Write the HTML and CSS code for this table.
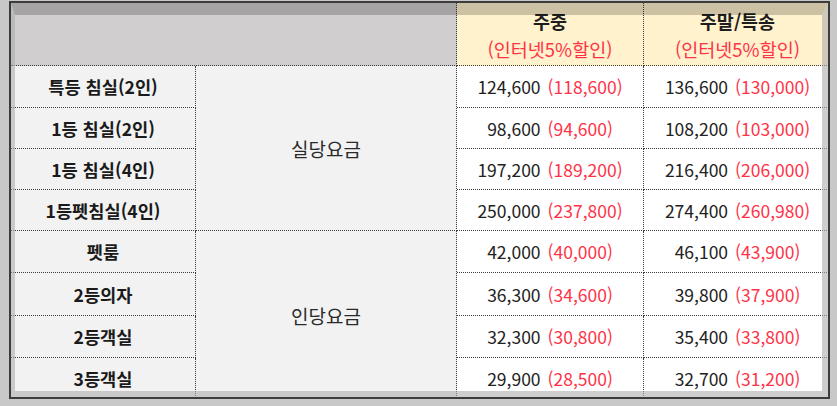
FILE: index.html
```html
<!DOCTYPE html>
<html lang="ko">
<head>
<meta charset="utf-8">
<title>요금표</title>
<link rel="stylesheet" href="styles.css">
</head>
<body>
<div class="window">
  <div class="grid">
    <div class="cell head-gray"></div>
    <div class="cell head-yellow"><span class="h-title">주중</span><span class="h-sub">(인터넷5%할인)</span></div>
    <div class="cell head-yellow last"><span class="h-title">주말/특송</span><span class="h-sub">(인터넷5%할인)</span></div>

    <div class="cell room">특등 침실(2인)</div>
    <div class="cell kind kind-a">실당요금</div>
    <div class="cell price"><span>124,600</span><span class="dc">(118,600)</span></div>
    <div class="cell price last"><span>136,600</span><span class="dc">(130,000)</span></div>

    <div class="cell room">1등 침실(2인)</div>
    <div class="cell price"><span>98,600</span><span class="dc">(94,600)</span></div>
    <div class="cell price last"><span>108,200</span><span class="dc">(103,000)</span></div>

    <div class="cell room">1등 침실(4인)</div>
    <div class="cell price"><span>197,200</span><span class="dc">(189,200)</span></div>
    <div class="cell price last"><span>216,400</span><span class="dc">(206,000)</span></div>

    <div class="cell room">1등펫침실(4인)</div>
    <div class="cell price"><span>250,000</span><span class="dc">(237,800)</span></div>
    <div class="cell price last"><span>274,400</span><span class="dc">(260,980)</span></div>

    <div class="cell room">펫룸</div>
    <div class="cell kind kind-b">인당요금</div>
    <div class="cell price"><span>42,000</span><span class="dc">(40,000)</span></div>
    <div class="cell price last"><span>46,100</span><span class="dc">(43,900)</span></div>

    <div class="cell room">2등의자</div>
    <div class="cell price"><span>36,300</span><span class="dc">(34,600)</span></div>
    <div class="cell price last"><span>39,800</span><span class="dc">(37,900)</span></div>

    <div class="cell room">2등객실</div>
    <div class="cell price"><span>32,300</span><span class="dc">(30,800)</span></div>
    <div class="cell price last"><span>35,400</span><span class="dc">(33,800)</span></div>

    <div class="cell room">3등객실</div>
    <div class="cell price"><span>29,900</span><span class="dc">(28,500)</span></div>
    <div class="cell price last"><span>32,700</span><span class="dc">(31,200)</span></div>
  </div>
  <div class="frame"></div>
</div>
</body>
</html>
```
FILE: styles.css
```css
* { box-sizing: border-box; }
html, body {
  margin: 0;
  padding: 0;
  background: #c8c8c8;
  width: 837px;
  height: 406px;
  overflow: hidden;
}
body {
  padding: 1px 0 0 9px;
  font-family: "Noto Sans CJK KR", "Noto Sans", sans-serif;
  color: #1e1e1e;
}
.window {
  position: relative;
  width: 821px;
  height: 398px;
  border: 2px solid #3c3c3c;
  overflow: hidden;
  background: #c8c8c8;
}
.grid {
  display: grid;
  width: 820px;
  grid-template-columns: 185px 261px 187px 187px;
  grid-template-rows: 63px 42px 41px 41px 41px 42px 43px 42px 42px;
}
.cell {
  border-right: 1px dotted #3a3a3a;
  border-bottom: 1px dotted #3a3a3a;
  display: flex;
  align-items: center;
  justify-content: center;
  white-space: nowrap;
}
.head-gray {
  grid-column: 1 / 3;
  background: #d0cece;
}
.head-yellow {
  background: #fff2cc;
  flex-direction: column;
  padding-top: 2px;
}
.h-title {
  font-weight: 700;
  font-size: 18.5px;
  line-height: 28px;
  color: #1e1e1e;
}
.h-sub {
  font-size: 18.5px;
  line-height: 28px;
  color: #ff3347;
}
.room {
  background: #f2f2f2;
  font-weight: 700;
  font-size: 17.6px;
  color: #1a1a1a;
}
.kind {
  background: #f2f2f2;
  font-size: 19px;
  color: #2a2a2a;
}
.kind-a { grid-row: 2 / 6; grid-column: 2; }
.kind-b { grid-row: 6 / 10; grid-column: 2; }
.price {
  background: #ffffff;
  font-size: 17.5px;
  color: #222;
  gap: 7px;
}
.price .dc {
  color: #ff3347;
}
.last { border-right: none; }
.frame {
  position: absolute;
  inset: 0;
  pointer-events: none;
  border-top: 12px solid rgba(0, 0, 0, 0.2);
  border-left: 4px solid rgba(175, 175, 175, 0.6);
  border-right: 6px solid rgba(175, 175, 175, 0.6);
  border-bottom: 6px solid rgba(175, 175, 175, 0.6);
}
```
